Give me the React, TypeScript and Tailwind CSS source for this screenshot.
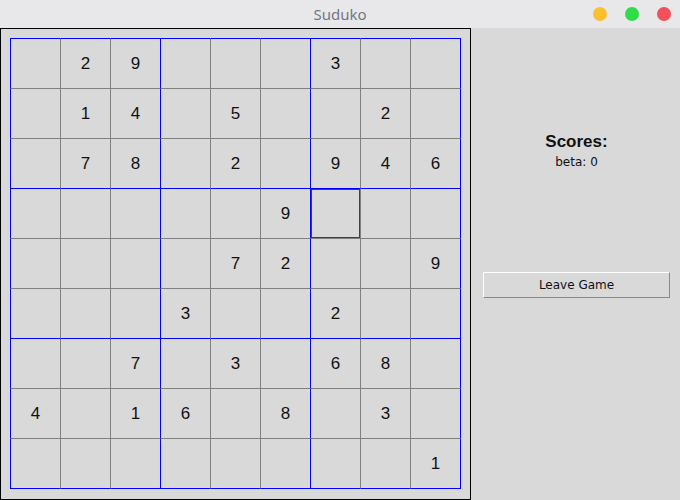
import React from "react";

const board: (number | null)[][] = [
  [null, 2, 9, null, null, null, 3, null, null],
  [null, 1, 4, null, 5, null, null, 2, null],
  [null, 7, 8, null, 2, null, 9, 4, 6],
  [null, null, null, null, null, 9, null, null, null],
  [null, null, null, null, 7, 2, null, null, 9],
  [null, null, null, 3, null, null, 2, null, null],
  [null, null, 7, null, 3, null, 6, 8, null],
  [4, null, 1, 6, null, 8, null, 3, null],
  [null, null, null, null, null, null, null, null, 1],
];

function Cell({ r, c, v }: { r: number; c: number; v: number | null }) {
  const left = c % 3 === 0 ? "border-l-[#0000ff]" : "border-l-[#808080]";
  const top = r % 3 === 0 ? "border-t-[#0000ff]" : "border-t-[#808080]";
  const right = c === 8 ? "border-r border-r-[#0000ff]" : "";
  const bottom = r === 8 ? "border-b border-b-[#0000ff]" : "";
  const selected = r === 3 && c === 6;
  return (
    <div className={`border-l border-t ${left} ${top} ${right} ${bottom} flex items-center justify-center`}>
      {selected ? (
        <div className="w-full h-full border border-[#dd0000]" />
      ) : (
        <span className="text-[17px] leading-none text-[#111]">{v ?? ""}</span>
      )}
    </div>
  );
}

export default function App() {
  return (
    <div className="w-[680px] h-[500px] flex flex-col bg-[#d9d9d9] overflow-hidden" style={{ fontFamily: '"Liberation Sans", Arial, sans-serif' }}>
      <div className="h-[28px] shrink-0 bg-[#e8e8eb] relative flex items-center justify-center">
        <span className="text-[15px] text-[#737684]" style={{ fontFamily: '"Noto Sans", sans-serif' }}>Suduko</span>
        <div className="absolute right-[9px] top-[7px] flex gap-[18px]">
          <div className="w-[14px] h-[14px] rounded-full bg-[#fbbf2f]" />
          <div className="w-[14px] h-[14px] rounded-full bg-[#30dd48]" />
          <div className="w-[14px] h-[14px] rounded-full bg-[#f2505a]" />
        </div>
      </div>
      <div className="flex flex-1">
        <div className="w-[471px] h-[472px] shrink-0 border border-black pt-[9px] pl-[9px]">
          <div className="grid grid-cols-[repeat(8,50px)_51px] grid-rows-[repeat(8,50px)_51px] w-[451px] h-[451px]">
            {board.map((row, r) => row.map((v, c) => <Cell key={`${r}-${c}`} r={r} c={c} v={v} />))}
          </div>
        </div>
        <div className="flex-1 flex flex-col items-stretch pt-[104px] pl-[12px] pr-[11px]">
          <div className="h-[20px] leading-[20px] text-center text-[17px] font-bold text-[#111]">Scores:</div>
          <div className="h-[14px] leading-[14px] mt-[3px] text-center text-[12px] text-[#111]" style={{ fontFamily: '"DejaVu Sans", sans-serif' }}>beta: 0</div>
          <button className="mt-[103px] h-[26px] w-[187px] bg-[#d9d9d9] border border-t-white border-l-white border-r-[#8a8a8a] border-b-[#8a8a8a] text-[12px] text-[#111]" style={{ fontFamily: '"DejaVu Sans", sans-serif' }}>
            Leave Game
          </button>
        </div>
      </div>
    </div>
  );
}
